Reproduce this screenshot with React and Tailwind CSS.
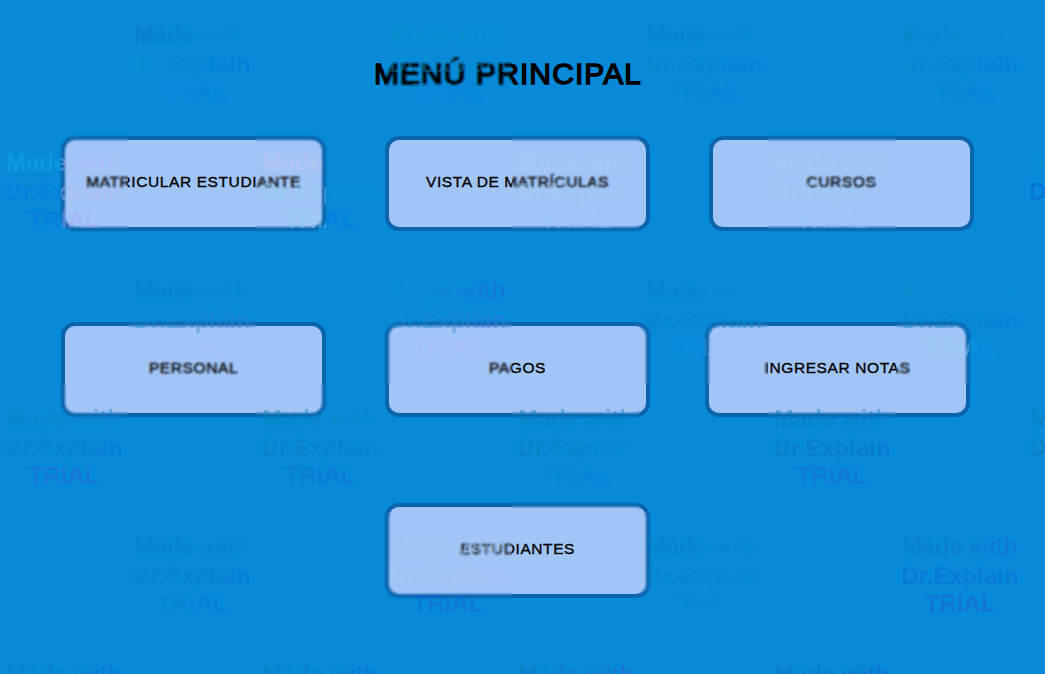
import React from "react";

const BG = "#078ad9";

// plain left-to-right tint of one watermark line
const tint = (a, b) => `linear-gradient(90deg, ${a}, ${b})`;
// line that crosses a button edge, px is measured from the cell's left side
const edge = (a, b, px) => `linear-gradient(90deg, ${a} 0 ${px}px, ${b} ${px}px 100%)`;

// watermark cells, 9 columns x 6 rows of 128px, only every other one is used
const marks = {
  "1-0": [tint("#0a6cb0", "#0a8ccc"), tint("#0a9ac0", "#0268d8"), tint("#0a98d8", "#0a68e8")],
  "3-0": [tint("#0a9cc4", "#0a98d0"), tint("#0a94cc", "#0a88d4"), tint("#0a92d8", "#0a70e8")],
  "5-0": [tint("#0a78b0", "#0a88d4"), tint("#0a88b8", "#0a78dc"), tint("#0a8cc0", "#0a78e0")],
  "7-0": [tint("#0a84b4", "#0a90d0"), tint("#0a8cbc", "#0a70d8"), tint("#0a90c0", "#0a74e0")],

  "0-1": [edge("#18b0e8", "#b8bcf8", 61), edge("#0a70e8", "#bcbcf2", 61), edge("#0a70e8", "#a8a4f6", 61)],
  "2-1": [edge("#ccc4ea", "#0a8ccc", 70), edge("#90d4ee", "#0a94d0", 70), edge("#8cd4ee", "#0a70e8", 70)],
  "4-1": [tint("#a4d4f2", "#a6d0f8"), tint("#a0d6f2", "#a2c8fa"), tint("#98ccf8", "#94bcfa")],
  "6-1": [tint("#a2d4ee", "#9accf8"), tint("#9cd8ea", "#9cc4fa"), tint("#98ccf8", "#94bcfa")],
  "8-1": [tint("#0a9cc8", "#0a8cd8"), tint("#0a58d8", "#0a58d8"), tint("#0a74e8", "#0a74e8")],

  "1-2": [tint("#0a78b0", "#0a88d0"), tint("#0a90c4", "#3a78d8"), tint("#90d0f8", "#acb4fa")],
  "3-2": [tint("#0a9cd0", "#2a58d4"), tint("#0a98cc", "#4a70e0"), tint("#a4b4fa", "#bcb0f6")],
  "5-2": [tint("#0a78b0", "#0a90d0"), tint("#0a80b8", "#0a88d4"), edge("#0a90e0", "#98c0fa", 65)],
  "7-2": [tint("#0a90bc", "#0a90d4"), tint("#0a88b8", "#0a78d8"), edge("#90d0f4", "#0a98e8", 73)],

  "0-3": [tint("#0a80b0", "#1a80c8"), tint("#0a80b8", "#0a70d0"), tint("#2a64d0", "#3a5cd0")],
  "2-3": [tint("#0a84ac", "#0a88c4"), tint("#0a78ac", "#0a7cc8"), tint("#0a74c4", "#1a68d0")],
  "4-3": [tint("#0a78a8", "#0a84c4"), tint("#0a78a0", "#0a88d0"), tint("#0a88c8", "#0a78d8")],
  "6-3": [tint("#0a70a8", "#0a80c8"), tint("#0a78ac", "#0a68c8"), tint("#1a68d0", "#2a60d0")],
  "8-3": [tint("#0a78a8", "#0a88c4"), tint("#0a78a8", "#0a78c4"), tint("#0a78c4", "#0a78c4")],

  "1-4": [tint("#0a78b0", "#0a80c8"), tint("#0a80b8", "#0a70d0"), tint("#0a88c8", "#0a68d8")],
  "3-4": [tint("#98d0f4", "#a8c8f8"), tint("#9cd4f4", "#b8bcfa"), tint("#0a64d8", "#2a5cd4")],
  "5-4": [tint("#0a74ac", "#0a88c8"), tint("#0a80b8", "#0a84d4"), tint("#0a88c0", "#0a84d8")],
  "7-4": [tint("#0a78ac", "#2060d8"), tint("#0a64d8", "#0a68d8"), tint("#2058d4", "#2a54d0")],

  "0-5": [tint("#0a78b0", "#0a68d0"), tint(BG, BG), tint(BG, BG)],
  "2-5": [tint("#0a78a8", "#0a68d0"), tint(BG, BG), tint(BG, BG)],
  "4-5": [tint("#0a78a0", "#3a58d0"), tint(BG, BG), tint(BG, BG)],
  "6-5": [tint("#0a70a8", "#2058c8"), tint(BG, BG), tint(BG, BG)],
};

const cells = [];
for (let row = 0; row < 6; row++) {
  for (let col = 0; col < 9; col++) {
    cells.push([col, row]);
  }
}

const Boton = ({ label }) => (
  <button className="w-[265px] h-[95px] shrink-0 rounded-[14px] border-4 border-[#0a64ae] bg-[#a2c5f7] flex items-center justify-center pb-[4px]">
    <span className="text-[15.5px] leading-none tracking-[0.6px] text-black [-webkit-text-stroke:0.35px_black]">
      {label}
    </span>
  </button>
);

const App = () => {
  return (
    <div className="relative w-[1045px] h-[674px] overflow-hidden bg-[#078bd9] [font-family:'Liberation_Sans',sans-serif]">
      <div className="pt-[55px] pb-[43px] flex justify-center">
        <h1 className="ml-[-29px] text-[30px] leading-[38px] tracking-[1.1px] text-black [-webkit-text-stroke:1.5px_black]">
          MENÚ PRINCIPAL
        </h1>
      </div>

      <div className="flex gap-[59px] pl-[61px]">
        <Boton label="MATRICULAR ESTUDIANTE" />
        <Boton label="VISTA DE MATRÍCULAS" />
        <Boton label="CURSOS" />
      </div>
      <div className="flex gap-[59px] pl-[61px] pt-[91px]">
        <Boton label="PERSONAL" />
        <Boton label="PAGOS" />
        <div className="ml-[-4px]">
          <Boton label="INGRESAR NOTAS" />
        </div>
      </div>
      <div className="flex pl-[385px] pt-[86px]">
        <Boton label="ESTUDIANTES" />
      </div>

      {/* trial watermark: checker of softened squares over the whole page */}
      <div className="absolute inset-0 pointer-events-none grid grid-cols-[repeat(9,128px)] auto-rows-[128px]">
        {cells.map(([col, row]) => {
          const lines = marks[`${col}-${row}`];
          if (!lines) return <div key={`${col}-${row}`} />;
          return (
            <div
              key={`${col}-${row}`}
              className="pt-[21px] overflow-hidden backdrop-blur-[1px] text-center text-[24px] leading-[28.5px] font-bold whitespace-nowrap"
            >
              {["Made with", "Dr.Explain", "TRIAL"].map((text, i) => (
                <div
                  key={text}
                  className="text-transparent bg-clip-text opacity-40"
                  style={{ backgroundImage: lines[i] }}
                >
                  {text}
                </div>
              ))}
            </div>
          );
        })}
      </div>
    </div>
  );
};

export default App;
